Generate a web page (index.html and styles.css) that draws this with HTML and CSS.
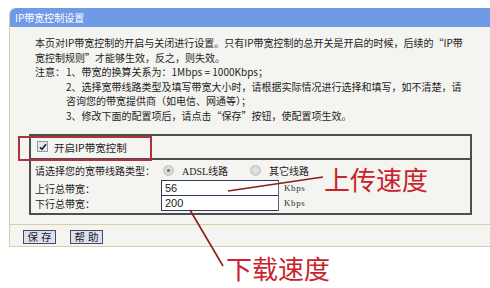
FILE: index.html
```html
<!DOCTYPE html>
<html lang="zh-CN">
<head>
<meta charset="utf-8">
<title>IP带宽控制设置</title>
<link rel="stylesheet" href="styles.css">
</head>
<body>
<div class="panel">
  <div class="panel-head">IP带宽控制设置</div>
  <div class="intro">
    <div class="line">本页对IP带宽控制的开启与关闭进行设置。只有IP带宽控制的总开关是开启的时候，后续的“IP带</div>
    <div class="line">宽控制规则”才能够生效，反之，则失效。</div>
    <div class="notes">
      <div class="note-label">注意：</div>
      <div class="note-items">
        <div class="line">1、带宽的换算关系为：1Mbps = 1000Kbps；</div>
        <div class="line">2、选择宽带线路类型及填写带宽大小时，请根据实际情况进行选择和填写，如不清楚，请</div>
        <div class="line">咨询您的带宽提供商（如电信、网通等）；</div>
        <div class="line">3、修改下面的配置项后，请点击“保存”按钮，使配置项生效。</div>
      </div>
    </div>
  </div>

  <div class="box">
    <div class="box-top">
      <span class="check"><svg width="8" height="8" viewBox="0 0 8 8"><path d="M1 4.2 L3 6.3 L7 1.2" fill="none" stroke="#222" stroke-width="1.6"/></svg></span>
      <span class="check-label">开启IP带宽控制</span>
    </div>
    <div class="box-body">
      <div class="row row-type">
        <span class="label">请选择您的宽带线路类型：</span>
        <span class="opt opt-first"><span class="radio on"></span><span class="opt-text">ADSL线路</span></span>
        <span class="opt"><span class="radio"></span><span class="opt-text">其它线路</span></span>
      </div>
      <div class="row row-in">
        <span class="label">上行总带宽：</span>
        <span class="field">56</span>
        <span class="unit">Kbps</span>
      </div>
      <div class="row row-in row-last">
        <span class="label">下行总带宽：</span>
        <span class="field">200</span>
        <span class="unit">Kbps</span>
      </div>
    </div>
  </div>

  <div class="foot">
    <span class="btn">保存</span>
    <span class="btn">帮助</span>
  </div>
</div>

<div class="mark-box"></div>
<svg class="mark-lines" width="490" height="288" viewBox="0 0 490 288">
  <path d="M228 191 L323 177" stroke="#8a1c1c" stroke-width="1.6" fill="none"/>
  <path d="M190 210 L223 266" stroke="#8a1c1c" stroke-width="1.6" fill="none"/>
</svg>
<div class="mark-text mark-up">上传速度</div>
<div class="mark-text mark-down">下载速度</div>
</body>
</html>
```

FILE: styles.css
```css
html, body {
  margin: 0;
  padding: 0;
  background: #ffffff;
  overflow: hidden;
}
body {
  width: 490px;
  height: 288px;
  position: relative;
  font-family: "Noto Sans CJK SC", "Noto Sans", sans-serif;
  color: #1e1e1e;
}
.panel {
  margin: 8px 0 0 9px;
  width: 481px;
  background: #f4f4f1;
  border-left: 1px solid #dccca8;
  border-bottom: 1px solid #dccca8;
  border-top-left-radius: 6px;
  overflow: hidden;
}
.panel-head {
  height: 19px;
  line-height: 19px;
  background: #6f9ae6;
  color: #ffffff;
  font-size: 10px;
  padding-left: 5px;
  border-top-left-radius: 6px;
}
.intro {
  padding: 9px 0 0 25px;
  font-size: 10px;
  line-height: 14.5px;
  white-space: nowrap;
}
.notes {
  display: grid;
  grid-template-columns: 31px auto;
}
.box {
  margin: 11px 0 0 19px;
  width: 439px;
  border: 2px solid #4e4e4e;
}
.box-top {
  height: 22px;
  display: flex;
  align-items: center;
  padding-left: 6px;
  border-bottom: 2px solid #4e4e4e;
  font-size: 10.5px;
}
.check {
  width: 9px;
  height: 9px;
  border: 1px solid #8d9bb0;
  background: #e4e8ef;
  display: flex;
  align-items: center;
  justify-content: center;
  margin-top: -1px;
}
.check-label {
  margin-left: 6px;
}
.box-body {
  padding: 0 0 2px 4px;
  font-size: 10px;
}
.row {
  display: flex;
  align-items: center;
}
.row-type {
  height: 20px;
}
.row-in {
  height: 16px;
}
.row-last {
  margin-top: -1px;
}
.label {
  width: 126px;
  flex: none;
}
.opt {
  display: flex;
  align-items: center;
}
.opt-first {
  width: 87px;
  margin-left: 2px;
}
.radio {
  width: 9px;
  height: 9px;
  border: 1px solid #c2c2c2;
  border-radius: 50%;
  background: radial-gradient(circle, #e8e8e8 0, #d4d4d4 70%);
  display: inline-block;
  position: relative;
}
.radio.on::after {
  content: "";
  position: absolute;
  left: 3px;
  top: 3px;
  width: 3px;
  height: 3px;
  border-radius: 50%;
  background: #6a6a6a;
}
.opt-text {
  margin-left: 8px;
  font-family: "Liberation Serif", "Noto Sans CJK SC", serif;
  font-size: 10px;
}
.field {
  width: 113px;
  height: 14px;
  line-height: 14px;
  border: 1px solid #2e3a5c;
  border-right-color: #6a6a6a;
  background: #ffffff;
  padding-left: 3px;
  font-family: "Liberation Sans", Arial, sans-serif;
  font-size: 11px;
  color: #202020;
}
.unit {
  margin-left: 5px;
  font-family: "Liberation Serif", serif;
  font-size: 9px;
  letter-spacing: 0.6px;
  color: #303030;
}
.foot {
  margin-top: 9px;
  border-top: 1px solid #dccca8;
  padding: 5px 0 2px 13px;
  display: flex;
  gap: 14px;
}
.btn {
  width: 31px;
  height: 12px;
  line-height: 12px;
  border: 1px solid #4a4a5a;
  background: #dcdff0;
  font-size: 10.5px;
  letter-spacing: 3px;
  text-indent: 3px;
  text-align: center;
  color: #1a1a1a;
}
.mark-box {
  position: absolute;
  left: 18px;
  top: 136px;
  width: 130px;
  height: 21px;
  border: 2px solid #b0323b;
}
.mark-lines {
  position: absolute;
  left: 0;
  top: 0;
}
.mark-text {
  position: absolute;
  font-size: 26px;
  line-height: 26px;
  color: #c8242d;
  white-space: nowrap;
}
.mark-up {
  left: 324px;
  top: 166px;
}
.mark-down {
  left: 226px;
  top: 255px;
}
```
